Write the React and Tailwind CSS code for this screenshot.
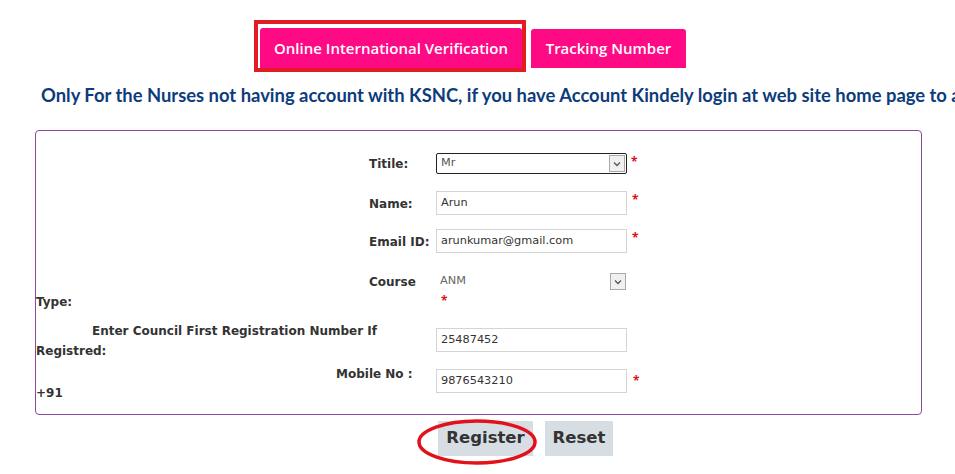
import React from 'react';

const label = 'font-["DejaVu_Sans",sans-serif] font-bold text-[12px] text-[#333] leading-[18px] whitespace-nowrap';
const inputBox =
  'w-[191px] h-[24px] border border-[#d4d4d4] bg-white px-[4px] flex items-center font-["DejaVu_Sans",sans-serif] text-[11.3px] text-[#333]';

function Star({ className = '' }) {
  return <span className={`text-[#e0101a] text-[12px] font-bold leading-none ${className}`}>*</span>;
}

function Arrow({ className = '' }) {
  return (
    <span
      className={`w-[16px] h-[17px] border border-[#a9a9a9] bg-[#f0f0f0] flex items-center justify-center ${className}`}
    >
      <svg width="8" height="6" viewBox="0 0 8 6">
        <path d="M1 1.5 L4 4.5 L7 1.5" fill="none" stroke="#555" strokeWidth="1.3" />
      </svg>
    </span>
  );
}

export default function App() {
  return (
    <div className="w-[955px] h-[474px] bg-white overflow-hidden relative font-['Open_Sans',sans-serif]">
      {/* Tabs */}
      <div className="flex items-end pt-[20px] pl-[254px]">
        <div className="w-[272px] h-[52px] border-4 border-[#e31b23] pt-[4px] pl-[2px]">
          <div className="h-full bg-[#fe0a85] rounded-t-[3px] flex items-center justify-center text-white text-[15px] font-semibold">
            Online International Verification
          </div>
        </div>
        <div className="ml-[5px] mb-[4px] w-[155px] h-[39px] bg-[#fe0a85] rounded-t-[3px] flex items-center justify-center text-white text-[15px] font-semibold">
          Tracking Number
        </div>
      </div>

      {/* Notice */}
      <div className="mt-[12px] pl-[41px] whitespace-nowrap overflow-hidden text-[#0d3c7c] font-['Lato',sans-serif] font-bold text-[18.4px] leading-[22px]">
        Only For the Nurses not having account with KSNC, if you have Account Kindely login at web site home page to apply
      </div>

      {/* Form */}
      <div className="ml-[35px] mt-[24px] w-[887px] h-[285px] border border-[#8b4a9c] rounded-[4px]">
        {/* Title */}
        <div className="flex items-center mt-[22px] h-[21px]">
          <div className={`w-[400px] pl-[333px] ${label}`}>Titile:</div>
          <div className="w-[191px] h-[21px] border border-[#222] rounded-[2px] flex items-center justify-between pl-[4px] pr-[1px] font-['DejaVu_Sans',sans-serif] text-[11.3px] text-[#555]">
            <span>Mr</span>
            <Arrow className="h-[17px]" />
          </div>
          <Star className="ml-[4px] -mt-[3px]" />
        </div>

        {/* Name */}
        <div className="flex items-center mt-[17px] h-[24px]">
          <div className={`w-[400px] pl-[333px] pt-[2px] ${label}`}>Name:</div>
          <div className={inputBox}>Arun</div>
          <Star className="ml-[5px] -mt-[6px]" />
        </div>

        {/* Email */}
        <div className="flex items-center mt-[14px] h-[24px]">
          <div className={`w-[400px] pl-[333px] pt-[2px] ${label}`}>Email ID:</div>
          <div className={inputBox}>arunkumar@gmail.com</div>
          <Star className="ml-[5px] -mt-[6px]" />
        </div>

        {/* Course */}
        <div className="flex mt-[20px]">
          <div className="w-[400px]">
            <div className={`pl-[333px] h-[18px] ${label}`}>Course</div>
            <div className={`mt-[2px] h-[18px] ${label}`}>Type:</div>
          </div>
          <div className="w-[191px]">
            <div className="h-[17px] flex items-center justify-between pl-[4px] font-['DejaVu_Sans',sans-serif] text-[11.3px] text-[#666]">
              <span>ANM</span>
              <Arrow className="mr-[1px]" />
            </div>
            <Star className="block ml-[5px] mt-[5px]" />
          </div>
        </div>

        {/* Registration */}
        <div className="flex mt-[11px]">
          <div className="w-[400px]">
            <div className={`pl-[56px] h-[18px] ${label}`}>Enter Council First Registration Number If</div>
            <div className={`mt-[2px] h-[18px] ${label}`}>Registred:</div>
          </div>
          <div className={`mt-[6px] ${inputBox}`}>25487452</div>
        </div>

        {/* Mobile */}
        <div className="flex mt-[5px]">
          <div className="w-[400px]">
            <div className={`pl-[300px] h-[18px] ${label}`}>Mobile No :</div>
            <div className={`mt-[1px] h-[18px] ${label}`}>+91</div>
          </div>
          <div className={`mt-[4px] ${inputBox}`}>9876543210</div>
          <Star className="ml-[6px] mt-[10px]" />
        </div>
      </div>

      {/* Buttons */}
      <div className="flex mt-[6px] pl-[438px] gap-[12px] relative">
        <button className="w-[95px] h-[35px] bg-[#d6dde3] font-['DejaVu_Sans',sans-serif] font-bold text-[16.5px] text-[#333]">
          Register
        </button>
        <button className="w-[68px] h-[35px] bg-[#d6dde3] font-['DejaVu_Sans',sans-serif] font-bold text-[16.5px] text-[#333]">
          Reset
        </button>
        <svg className="absolute left-[416px] -top-[2px]" width="124" height="48" viewBox="0 0 124 48">
          <ellipse cx="61" cy="23" rx="58" ry="21" fill="none" stroke="#e3111b" strokeWidth="3.5" />
        </svg>
      </div>
    </div>
  );
}
